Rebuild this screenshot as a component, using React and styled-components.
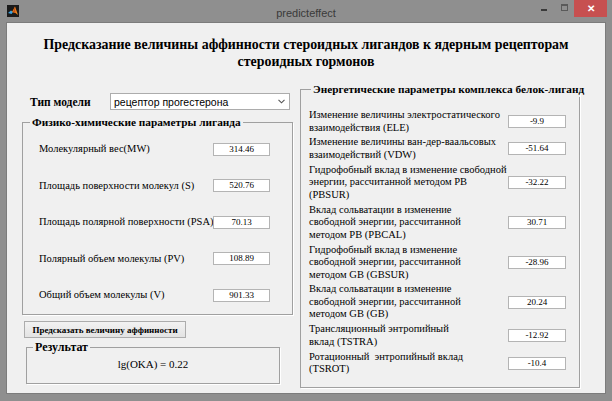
import React from "react";
import styled, { createGlobalStyle } from "styled-components";

const GlobalStyle = createGlobalStyle`
  html, body {
    margin: 0;
    padding: 0;
    background: #8f8f8f;
  }
  body {
    font-family: "Liberation Serif", "Times New Roman", serif;
    color: #000;
  }
`;

const ligand = [
  { label: "Молекулярный вес(MW)", value: "314.46" },
  { label: "Площадь поверхности молекул (S)", value: "520.76" },
  { label: "Площадь полярной поверхности (PSA)", value: "70.13" },
  { label: "Полярный объем молекулы (PV)", value: "108.89" },
  { label: "Общий объем молекулы (V)", value: "901.33" },
];

const energy = [
  { lines: ["Изменение величины электростатического", "взаимодействия (ELE)"], value: "-9.9" },
  { lines: ["Изменение величины ван-дер-ваальсовых", "взаимодействий (VDW)"], value: "-51.64" },
  {
    lines: ["Гидрофобный вклад в изменение свободной", "энергии, рассчитанной методом PB", "(PBSUR)"],
    value: "-32.22",
  },
  {
    lines: ["Вклад сольватации в изменение", "свободной энергии, рассчитанной", "методом PB (PBCAL)"],
    value: "30.71",
  },
  {
    lines: ["Гидрофобный вклад в изменение", "свободной энергии, рассчитанной", "методом GB (GBSUR)"],
    value: "-28.96",
  },
  {
    lines: ["Вклад сольватации в изменение", "свободной энергии, рассчитанной", "методом GB (GB)"],
    value: "20.24",
  },
  { lines: ["Трансляционный энтропийный", "вклад (TSTRA)"], value: "-12.92" },
  { lines: ["Ротационный  энтропийный вклад", "(TSROT)"], value: "-10.4" },
];

const Window = styled.div`
  width: 612px;
  height: 401px;
  box-sizing: border-box;
  background: #8f8f8f;
  display: flex;
  flex-direction: column;
  padding: 0 6px 7px 6px;
  overflow: hidden;
`;

const TitleBar = styled.div`
  height: 22px;
  flex-shrink: 0;
  display: grid;
  grid-template-columns: minmax(0, 1fr) auto minmax(0, 1fr);
  align-items: start;
`;

const AppIcon = styled.svg`
  display: block;
  width: 12px;
  height: 12px;
  margin: 5px 0 0 1px;
`;

const Caption = styled.div`
  font: 11px "Liberation Sans", Arial, sans-serif;
  color: #3a3a3a;
  line-height: 14px;
  padding-top: 6px;
`;

const Controls = styled.div`
  display: flex;
  justify-content: flex-end;
  align-items: flex-start;
  margin-right: -1px;
`;

const MinButton = styled.div`
  width: 6px;
  height: 2px;
  background: #3a3a3a;
  margin: 9px 14px 0 0;
`;

const MaxButton = styled.div`
  width: 5px;
  height: 4px;
  border: 1px solid #5a5a5a;
  border-top-width: 2px;
  margin: 4px 6px 0 0;
`;

const CloseButton = styled.div`
  width: 33px;
  height: 17px;
  background: #c75050;
  color: #fff;
  display: flex;
  align-items: center;
  justify-content: center;
  font: bold 10px "Liberation Sans", Arial, sans-serif;
`;

const Client = styled.div`
  flex: 1;
  min-height: 0;
  background: #f0f0f0;
  border: 1px solid #7c7c7c;
  display: flex;
  flex-direction: column;
`;

const Heading = styled.h1`
  margin: 13px 0 0 0;
  font: bold 13.9px/17px "Liberation Serif", "Times New Roman", serif;
  text-align: center;
`;

const Body = styled.div`
  display: flex;
  align-items: flex-start;
  padding-left: 15px;
  gap: 7px;
`;

const LeftColumn = styled.div`
  width: 271px;
  margin-top: 23px;
  display: flex;
  flex-direction: column;
  align-items: flex-start;
`;

const RightColumn = styled.div`
  width: 280px;
  margin-top: 12px;
`;

const ModelRow = styled.div`
  display: flex;
  align-items: center;
  height: 17px;
  padding-left: 8px;
`;

const ModelLabel = styled.div`
  width: 80px;
  font: bold 11.5px "Liberation Serif", "Times New Roman", serif;
`;

const Select = styled.div`
  width: 180px;
  height: 17px;
  box-sizing: border-box;
  border: 1px solid #acacac;
  background: #fff;
  display: flex;
  align-items: center;
  justify-content: space-between;
  padding: 0 4px 0 3px;
  font: 10.5px "Liberation Sans", Arial, sans-serif;
`;

const Group = styled.fieldset`
  box-sizing: border-box;
  width: ${(p) => p.$width || "100%"};
  margin: ${(p) => p.$margin || "0"};
  padding: ${(p) => p.$padding || "0"};
  border: 1px solid #a0a0a0;
  box-shadow: 1px 1px 0 #fff;
  min-width: 0;
`;

const Legend = styled.legend`
  font: bold ${(p) => p.$size || "11.3px"}/15px "Liberation Serif", "Times New Roman", serif;
  white-space: nowrap;
  padding: 0 2px;
  margin-left: ${(p) => p.$offset || "6px"};
`;

const ParamList = styled.div`
  display: flex;
  flex-direction: column;
  gap: ${(p) => p.$gap};
  padding: ${(p) => p.$padding};
`;

const ParamRow = styled.div`
  display: flex;
  align-items: center;
  justify-content: space-between;
`;

const ParamLabel = styled.div`
  flex: 1;
  min-width: 0;
  font: 10.5px/${(p) => p.$lh} "Liberation Serif", "Times New Roman", serif;
  white-space: pre;
`;

const ValueBox = styled.div`
  width: ${(p) => p.$width || "58px"};
  height: 13px;
  box-sizing: border-box;
  border: 1px solid #b4b4b4;
  background: #fff;
  font: 9px/11px "Liberation Serif", "Times New Roman", serif;
  text-align: center;
  flex-shrink: 0;
`;

const PredictButton = styled.button`
  margin: 6px 0 0 2px;
  width: 162px;
  height: 17px;
  padding: 0;
  border: 1px solid #acacac;
  background: linear-gradient(#f2f2f2, #e3e3e3);
  font: bold 9px "Liberation Serif", "Times New Roman", serif;
  color: #000;
`;

const ResultText = styled.div`
  text-align: center;
  font: 11px/14px "Liberation Serif", "Times New Roman", serif;
`;

const MatlabIcon = () => (
  <AppIcon viewBox="0 0 12 12">
    <rect width="12" height="12" fill="#1a1a1a" />
    <path d="M1 8 L4 5.5 L6 7 L4.5 9 Z" fill="#3da3e0" />
    <path d="M5 7 L8 1.5 L11 10 L8.5 8 Z" fill="#f08a1c" />
    <path d="M6 7 L8 1.5 L8.5 8 Z" fill="#c8501a" />
  </AppIcon>
);

const Chevron = () => (
  <svg width="7" height="5" viewBox="0 0 7 5">
    <path d="M0.5 0.8 L3.5 3.8 L6.5 0.8" fill="none" stroke="#555" strokeWidth="1.1" />
  </svg>
);

export default function App() {
  return (
    <>
      <GlobalStyle />
      <Window>
        <TitleBar>
          <div>
            <MatlabIcon />
          </div>
          <Caption>predicteffect</Caption>
          <Controls>
            <MinButton />
            <MaxButton />
            <CloseButton>✕</CloseButton>
          </Controls>
        </TitleBar>
        <Client>
          <Heading>
            Предсказание величины аффинности стероидных лигандов к ядерным рецепторам
            <br />
            стероидных гормонов
          </Heading>
          <Body>
            <LeftColumn>
              <ModelRow>
                <ModelLabel>Тип модели</ModelLabel>
                <Select>
                  <span>рецептор прогестерона</span>
                  <Chevron />
                </Select>
              </ModelRow>
              <Group $margin="5px 0 0 0">
                <Legend $offset="7px">Физико-химические параметры лиганда</Legend>
                <ParamList $gap="22.5px" $padding="12px 22px 12px 16px">
                  {ligand.map((p) => (
                    <ParamRow key={p.label}>
                      <ParamLabel $lh="14px">{p.label}</ParamLabel>
                      <ValueBox $width="57px">{p.value}</ValueBox>
                    </ParamRow>
                  ))}
                </ParamList>
              </Group>
              <PredictButton>Предсказать величину аффинности</PredictButton>
              <Group $width="254px" $margin="2px 0 0 4px" $padding="2px 0 12px 0">
                <Legend $offset="6px" $size="12px">Результат</Legend>
                <ResultText>lg(OKA) = 0.22</ResultText>
              </Group>
            </LeftColumn>
            <RightColumn>
              <Group>
                <Legend $offset="10px">Энергетические параметры комплекса белок-лиганд</Legend>
                <ParamList $gap="2.4px" $padding="12px 13px 11px 8px">
                  {energy.map((p) => (
                    <ParamRow key={p.lines[0] + p.value}>
                      <ParamLabel $lh="12.5px">{p.lines.join("\n")}</ParamLabel>
                      <ValueBox>{p.value}</ValueBox>
                    </ParamRow>
                  ))}
                </ParamList>
              </Group>
            </RightColumn>
          </Body>
        </Client>
      </Window>
    </>
  );
}
